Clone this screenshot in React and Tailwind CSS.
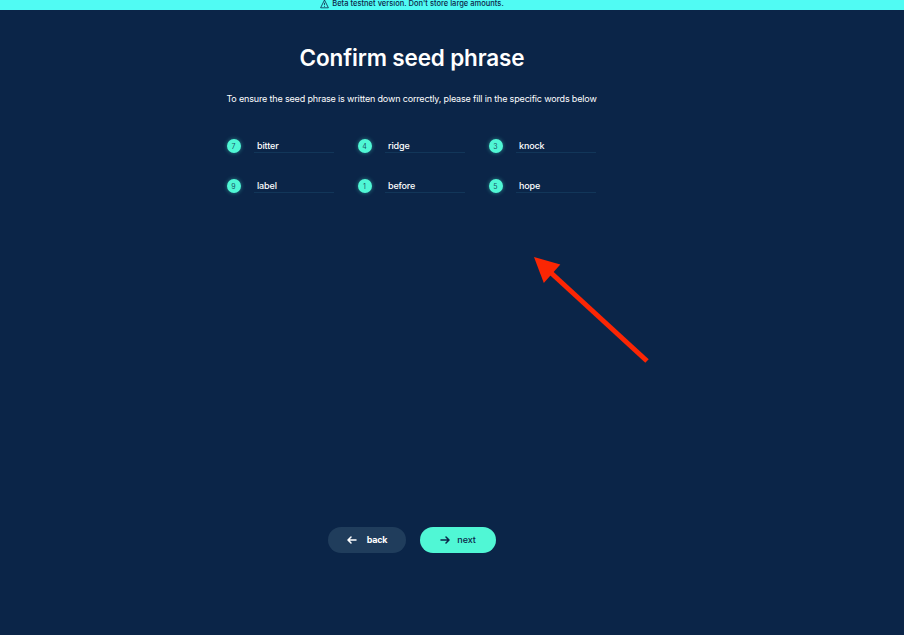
const words = [
  { position: 7, word: 'bitter' },
  { position: 4, word: 'ridge' },
  { position: 3, word: 'knock' },
  { position: 9, word: 'label' },
  { position: 1, word: 'before' },
  { position: 5, word: 'hope' },
];

function WarningIcon() {
  return (
    <svg className="h-[10px] w-[9px]" viewBox="0 0 9 10" fill="none" stroke="currentColor" strokeWidth="0.8" strokeLinejoin="round">
      <path d="M4.5 1 8.4 8.8H.6Z" />
      <path d="M4.5 3.8v2.4M4.5 7v.8" />
    </svg>
  );
}

function Arrow({ left }) {
  return (
    <svg
      className={left ? 'h-[8px] w-[10px] rotate-180' : 'h-[8px] w-[10px]'}
      viewBox="0 0 10 8"
      fill="none"
      stroke="currentColor"
      strokeWidth="1.5"
      strokeLinecap="round"
      strokeLinejoin="round"
    >
      <path d="M1 4h7.8M6 1l3 3-3 3" />
    </svg>
  );
}

function SeedWord({ position, word }) {
  return (
    <div className="flex h-[14px] items-center">
      <span className="flex size-[14px] shrink-0 items-center justify-center rounded-full bg-[#50f7d5] text-[7px] leading-none text-[#0b2548]/80 shadow-[0_0_4px_rgba(80,247,213,0.45)]">
        {position}
      </span>
      <div className="-mt-px ml-[13px] h-[14px] w-[80px] border-b border-[#123659] pl-[3.5px] text-[9px] leading-[14px] font-medium tracking-[-0.15px] text-white">
        {word}
      </div>
    </div>
  );
}

export default function App() {
  return (
    <div className="flex h-[635px] w-full flex-col overflow-hidden bg-[#0b2548] font-['Inter',sans-serif]">
      <div className="flex h-[10px] w-[904px] shrink-0 bg-[#50fbf3] text-[#0b2548]">
        <div className="flex h-[7px] w-[824px] items-center justify-center gap-[3px]">
          <WarningIcon />
          <span className="text-[7.5px] leading-[7px] font-medium tracking-[0.02px] whitespace-nowrap">
            Beta testnet version. Don't store large amounts.
          </span>
        </div>
      </div>
      <main className="flex w-[824px] flex-1 flex-col items-center">
        <h1 className="mt-[33px] text-[22.5px] leading-[30px] font-semibold tracking-[-0.15px] whitespace-nowrap text-white">
          Confirm seed phrase
        </h1>
        <p className="mt-[19px] mr-px text-[9px] leading-[14px] tracking-[-0.16px] whitespace-nowrap text-white">
          To ensure the seed phrase is written down correctly, please fill in the specific words below
        </p>
        <div className="mt-[33px] mr-px grid w-[370px] grid-cols-[107px_107px_107px] gap-x-[24px] gap-y-[26.4px]">
          {words.map((item) => (
            <SeedWord key={item.position} {...item} />
          ))}
        </div>
        <div className="mt-auto mb-[82px] flex gap-[13.5px] text-[9px] leading-none">
          <button className="flex h-[26px] w-[78.5px] items-center justify-center gap-[10px] rounded-full bg-[#203d5c] font-bold text-white">
            <Arrow left />
            <span className="-mt-px tracking-[-0.2px]">back</span>
          </button>
          <button className="flex h-[26px] w-[76.5px] items-center justify-center gap-[7px] rounded-full bg-[#50f7d5] font-medium text-[#0b2548]">
            <Arrow />
            <span className="-mt-px tracking-[-0.1px]">next</span>
          </button>
        </div>
      </main>
      <svg className="pointer-events-none absolute top-[250px] left-[525px] h-[120px] w-[130px]" viewBox="525 250 130 120" fill="#fb2604">
        <path d="M534 257 560.3 264.5 543.8 283Z" />
        <path d="M549 271 647 361" stroke="#fb2604" strokeWidth="5" />
      </svg>
    </div>
  );
}
